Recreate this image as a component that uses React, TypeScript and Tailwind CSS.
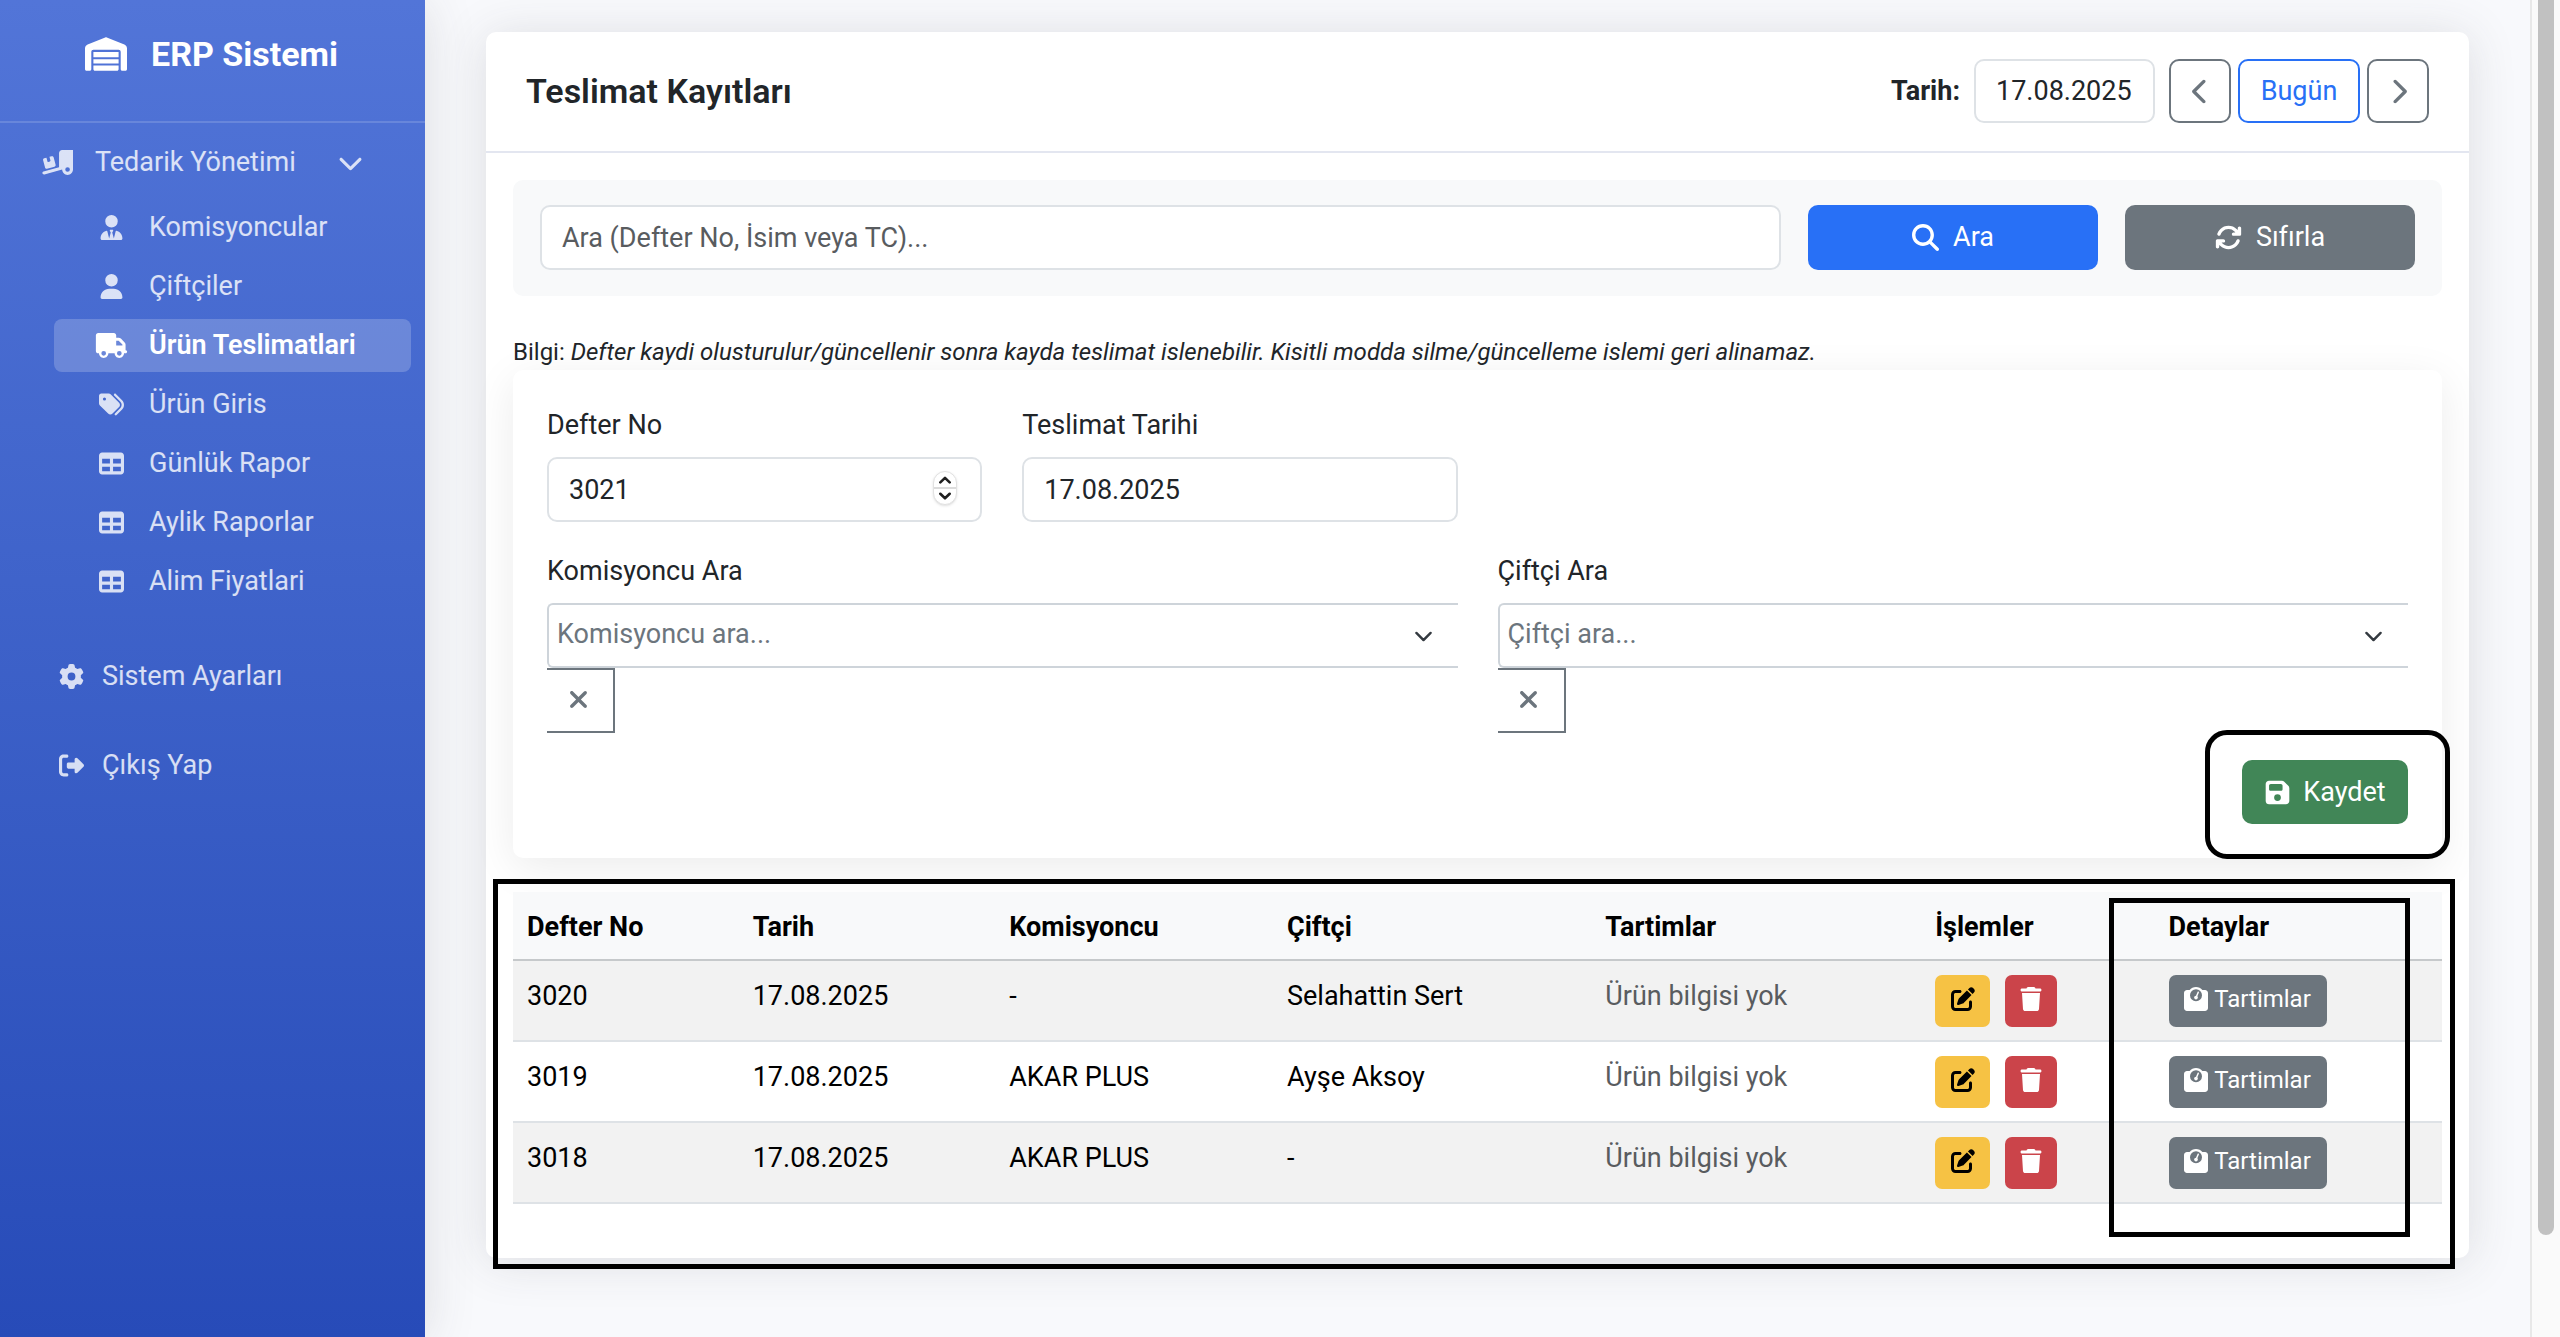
import { type ReactNode } from 'react';
import {
  FaArrowsRotate,
  FaChevronDown,
  FaChevronLeft,
  FaChevronRight,
  FaFloppyDisk,
  FaGear,
  FaMagnifyingGlass,
  FaPenToSquare,
  FaRightFromBracket,
  FaTable,
  FaTags,
  FaTrash,
  FaTruck,
  FaTruckRampBox,
  FaUser,
  FaUserTie,
  FaWarehouse,
  FaWeightScale,
  FaXmark,
} from 'react-icons/fa6';
import { BsChevronDown } from 'react-icons/bs';

const menu = [
  { label: 'Komisyoncular', Icon: FaUserTie },
  { label: 'Çiftçiler', Icon: FaUser },
  { label: 'Ürün Teslimatlari', Icon: FaTruck, active: true },
  { label: 'Ürün Giris', Icon: FaTags },
  { label: 'Günlük Rapor', Icon: FaTable },
  { label: 'Aylik Raporlar', Icon: FaTable },
  { label: 'Alim Fiyatlari', Icon: FaTable },
];

const rows = [
  { no: '3020', date: '17.08.2025', broker: '-', farmer: 'Selahattin Sert' },
  { no: '3019', date: '17.08.2025', broker: 'AKAR PLUS', farmer: 'Ayşe Aksoy' },
  { no: '3018', date: '17.08.2025', broker: 'AKAR PLUS', farmer: '-' },
];

const fieldClass =
  'h-[65px] w-full rounded-[10px] border-2 border-[#dee2e6] bg-white px-5 text-[27px] text-[#212529] outline-none';

function Sidebar() {
  return (
    <aside className="relative z-10 w-[425px] shrink-0 bg-linear-to-b from-[#5275d8] to-[#274bb8] text-[27px] text-white/80 shadow-[0_4px_48px_rgba(58,59,69,0.15)]">
      <a href="#" className="flex h-[123px] items-start gap-6 border-b-2 border-white/15 pt-[29px] pl-[85px] text-white">
        <FaWarehouse className="mt-2 h-[34px] w-[42px]" />
        <span className="text-[34px] leading-[51px] font-bold">ERP Sistemi</span>
      </a>
      <nav>
        <button type="button" className="flex h-[78px] w-full items-center pl-[42px] text-left" aria-expanded="true">
          <FaTruckRampBox className="h-[25px] w-[31px]" />
          <span className="ml-[22px] w-[243px]">Tedarik Yönetimi</span>
          <FaChevronDown className="size-[25px]" />
        </button>
        <ul className="flex flex-col gap-1.5 pr-[14px] pl-[54px]">
          {menu.map(({ label, Icon, active }) => (
            <li key={label}>
              <a
                href="#"
                className={
                  active
                    ? 'flex h-[53px] items-center rounded-lg bg-white/20 pl-10 font-semibold text-white'
                    : 'flex h-[53px] items-center rounded-lg pl-10'
                }
              >
                <Icon className="mr-5 h-[25px] w-[35px]" />
                {label}
              </a>
            </li>
          ))}
        </ul>
        <a href="#" className="mt-[42px] flex h-[53px] items-center gap-[18px] pl-[59px]">
          <FaGear className="size-[25px]" />
          Sistem Ayarları
        </a>
        <a href="#" className="mt-9 flex h-[53px] items-center gap-[18px] pl-[59px]">
          <FaRightFromBracket className="size-[25px]" />
          Çıkış Yap
        </a>
      </nav>
    </aside>
  );
}

function CardHeader() {
  const nav = 'flex h-16 items-center justify-center rounded-[10px] border-2';
  return (
    <header className="flex items-center justify-between border-b-2 border-[#e3e6f0] px-10 pt-[27px] pb-7">
      <h1 className="text-[34px] leading-[41px] font-semibold text-[#212529]">Teslimat Kayıtları</h1>
      <div className="flex items-center">
        <label htmlFor="day" className="mr-[14px] font-bold">
          Tarih:
        </label>
        <input
          id="day"
          defaultValue="17.08.2025"
          className="mr-[14px] h-16 w-[181px] rounded-[10px] border-2 border-[#dee2e6] px-5 outline-none"
        />
        <div className="flex gap-[7px]">
          <button type="button" aria-label="Önceki gün" className={`${nav} w-[62px] border-[#6c757d] text-[#6c757d]`}>
            <FaChevronLeft className="size-[27px]" />
          </button>
          <button type="button" className={`${nav} w-[122px] border-[#2870f6] text-[#2870f6]`}>
            Bugün
          </button>
          <button type="button" aria-label="Sonraki gün" className={`${nav} w-[62px] border-[#6c757d] text-[#6c757d]`}>
            <FaChevronRight className="size-[27px]" />
          </button>
        </div>
      </div>
    </header>
  );
}

function SearchBar() {
  return (
    <form className="grid grid-cols-12 gap-[27px] rounded-[10px] bg-[#f8f9fa] px-[27px] pt-[25px] pb-[26px]">
      <input
        aria-label="Ara"
        placeholder="Ara (Defter No, İsim veya TC)..."
        className={`${fieldClass} col-span-8 placeholder:text-[#595c5f]`}
      />
      <button
        type="button"
        className="col-span-2 flex h-[65px] items-center justify-center gap-[14px] rounded-[10px] bg-[#2870f6] text-white"
      >
        <FaMagnifyingGlass className="size-[27px]" />
        Ara
      </button>
      <button
        type="button"
        className="col-span-2 flex h-[65px] items-center justify-center gap-[14px] rounded-[10px] bg-[#6c757d] text-white"
      >
        <FaArrowsRotate className="size-[27px]" />
        Sıfırla
      </button>
    </form>
  );
}

function Picker({ id, label, placeholder }: { id: string; label: string; placeholder: string }) {
  return (
    <div className="col-span-6">
      <label htmlFor={id} className="mb-[10px] block">
        {label}
      </label>
      <div className="relative">
        <select
          id={id}
          className="block h-[65px] w-full appearance-none rounded-l-[6px] border-2 border-r-0 border-[#ced4da] bg-white pb-0.5 pl-2 text-[27px] text-[#6c757d] outline-none"
        >
          <option>{placeholder}</option>
        </select>
        <BsChevronDown className="pointer-events-none absolute top-6 right-[25px] size-[19px] stroke-1 text-[#343a40]" />
      </div>
      <button
        type="button"
        aria-label="Temizle"
        className="flex h-[65px] w-[68px] items-center justify-center border-2 border-l-0 border-[#6c757d] pr-1 pb-0.5 text-[#6c757d]"
      >
        <FaXmark className="size-[27px]" />
      </button>
    </div>
  );
}

function Stepper() {
  return (
    <span className="absolute top-[14px] right-[25px] flex h-[34px] w-6 flex-col items-center justify-center gap-[3px] rounded-full border border-[#e2e2e2] bg-white text-[#1f1f1f] shadow-sm">
      <svg viewBox="0 0 12 7" className="w-[14px]" fill="none" stroke="currentColor" strokeWidth="2.2" strokeLinecap="round" strokeLinejoin="round">
        <path d="M2 5.5 6 1.6l4 3.9" />
      </svg>
      <span className="h-0.5 w-full bg-[#dcdcdc]" />
      <svg viewBox="0 0 12 7" className="w-[14px]" fill="none" stroke="currentColor" strokeWidth="2.2" strokeLinecap="round" strokeLinejoin="round">
        <path d="m2 1.5 4 3.9 4-3.9" />
      </svg>
    </span>
  );
}

/** Black frame drawn on top of the content that it points out. */
function Frame({ className }: { className: string }) {
  return <span aria-hidden="true" className={`pointer-events-none absolute z-20 border-[5px] border-black ${className}`} />;
}

function DeliveryForm() {
  return (
    <form className="rounded-[10px] bg-white p-[34px] shadow-[0_10px_44px_rgba(0,0,0,0.08)]">
      <div className="grid grid-cols-12 gap-x-10 gap-y-7">
        <div className="col-span-3">
          <label htmlFor="book" className="mb-[10px] block">
            Defter No
          </label>
          <div className="relative">
            <input id="book" inputMode="numeric" defaultValue="3021" className={fieldClass} />
            <Stepper />
          </div>
        </div>
        <div className="col-span-3">
          <label htmlFor="delivery" className="mb-[10px] block">
            Teslimat Tarihi
          </label>
          <input id="delivery" defaultValue="17.08.2025" className={fieldClass} />
        </div>
        <div className="col-span-6" />
        <Picker id="broker" label="Komisyoncu Ara" placeholder="Komisyoncu ara..." />
        <Picker id="farmer" label="Çiftçi Ara" placeholder="Çiftçi ara..." />
      </div>
      <div className="mt-[27px] flex justify-end">
        <div className="relative">
          <button
            type="button"
            className="flex h-16 w-[166px] items-center justify-center gap-3 rounded-[10px] bg-[#418657] text-white"
          >
            <FaFloppyDisk className="size-[27px]" />
            Kaydet
          </button>
          <Frame className="-top-[30px] -right-[42px] -bottom-[35px] -left-[37px] rounded-[22px]" />
        </div>
      </div>
    </form>
  );
}

function Th({ children, className }: { children: ReactNode; className?: string }) {
  return <th className={`border-b-2 border-[#c6c9cb] px-[14px] pt-[14px] pb-[10px] text-left font-bold ${className ?? ''}`}>{children}</th>;
}

function Td({ children, className }: { children: ReactNode; className?: string }) {
  return <td className={`border-b-2 border-[#dee2e6] px-[14px] pt-[14px] pb-3 align-top ${className ?? ''}`}>{children}</td>;
}

function RecordTable() {
  return (
    <div className="relative mt-[34px]">
      <table className="w-full table-fixed border-separate border-spacing-0 text-black">
        <thead className="bg-[#f8f9fa]">
          <tr>
            <Th className="w-[11.7%]">Defter No</Th>
            <Th className="w-[13.3%]">Tarih</Th>
            <Th className="w-[14.4%]">Komisyoncu</Th>
            <Th className="w-[16.5%]">Çiftçi</Th>
            <Th className="w-[17.1%]">Tartimlar</Th>
            <Th className="w-[12.1%]">İşlemler</Th>
            <Th>Detaylar</Th>
          </tr>
        </thead>
        <tbody>
          {rows.map((row) => (
            <tr key={row.no} className="h-[81px] odd:bg-[#f2f2f2]">
              <Td>{row.no}</Td>
              <Td>{row.date}</Td>
              <Td>{row.broker}</Td>
              <Td>{row.farmer}</Td>
              <Td className="text-[#595c5f]">Ürün bilgisi yok</Td>
              <Td>
                <div className="flex gap-[15px]">
                  <button type="button" aria-label="Düzenle" className="flex h-[52px] w-[55px] items-center justify-center rounded-[7px] bg-[#f6c244] pb-1">
                    <FaPenToSquare className="size-6" />
                  </button>
                  <button type="button" aria-label="Sil" className="flex h-[52px] w-[52px] items-center justify-center rounded-[7px] bg-[#cb444a] pb-1 text-white">
                    <FaTrash className="size-6" />
                  </button>
                </div>
              </Td>
              <Td>
                <button type="button" className="flex h-[52px] w-[158px] items-center justify-center gap-1.5 rounded-[7px] bg-[#6c757d] pb-1 text-[24px] text-white">
                  <FaWeightScale className="size-6" />
                  Tartimlar
                </button>
              </Td>
            </tr>
          ))}
        </tbody>
      </table>
      <Frame className="-top-[13px] -right-[13px] -bottom-[65px] -left-5" />
      <Frame className="top-[6px] right-8 -bottom-[33px] w-[301px]" />
    </div>
  );
}

export default function App() {
  return (
    <div className="flex min-h-screen bg-[#f8f9fc] font-['Roboto',sans-serif] text-[27px] leading-[43px] text-[#212529]">
      <Sidebar />
      <main className="min-w-0 flex-1 pt-8 pr-[61px] pl-[61px]">
        <section className="rounded-[10px] bg-white shadow-[0_4px_48px_rgba(58,59,69,0.15)]">
          <CardHeader />
          <div className="px-[27px] pt-[27px] pb-[54px]">
            <SearchBar />
            <p className="mt-[38px] text-[24px] leading-9">
              Bilgi: <em>Defter kaydi olusturulur/güncellenir sonra kayda teslimat islenebilir. Kisitli modda silme/güncelleme islemi geri alinamaz.</em>
            </p>
            <DeliveryForm />
            <RecordTable />
          </div>
        </section>
      </main>
      <div aria-hidden="true" className="w-[30px] shrink-0 border-l-2 border-[#e8e8e8] bg-[#fafafa] pl-1.5">
        <div className="-mt-4 h-[1251px] w-4 rounded-full bg-[#c1c1c1]" />
      </div>
    </div>
  );
}
